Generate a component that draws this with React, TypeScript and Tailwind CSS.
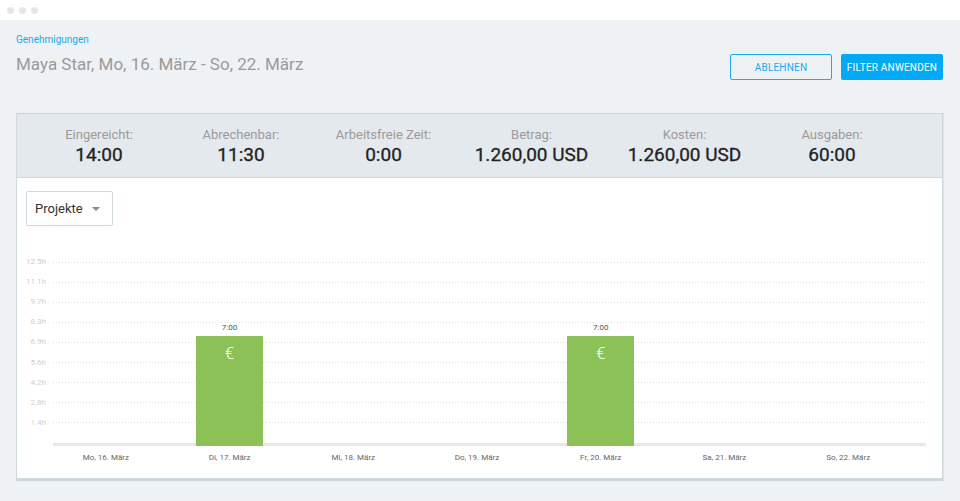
import React from "react";

const yTicks = ["12.5h", "11.1h", "9.7h", "8.3h", "6.9h", "5.6h", "4.2h", "2.8h", "1.4h"];

const days = [
  { label: "Mo, 16. März", hours: null },
  { label: "Di, 17. März", hours: "7:00" },
  { label: "Mi, 18. März", hours: null },
  { label: "Do, 19. März", hours: null },
  { label: "Fr, 20. März", hours: "7:00" },
  { label: "Sa, 21. März", hours: null },
  { label: "So, 22. März", hours: null },
];

const stats = [
  { label: "Eingereicht:", value: "14:00" },
  { label: "Abrechenbar:", value: "11:30" },
  { label: "Arbeitsfreie Zeit:", value: "0:00" },
  { label: "Betrag:", value: "1.260,00 USD" },
  { label: "Kosten:", value: "1.260,00 USD" },
  { label: "Ausgaben:", value: "60:00" },
];

export default function App() {
  return (
    <div className="w-[960px] h-[501px] overflow-hidden bg-[#eef2f5] font-['Roboto',sans-serif]">
      {/* Window chrome */}
      <div className="h-[20px] bg-white flex items-center gap-[5px] pl-[7px]">
        <span className="w-[7px] h-[7px] rounded-full bg-[#e3e7ed]"></span>
        <span className="w-[7px] h-[7px] rounded-full bg-[#e3e7ed]"></span>
        <span className="w-[7px] h-[7px] rounded-full bg-[#e3e7ed]"></span>
      </div>

      {/* Page header */}
      <div className="pl-4 pr-[17px] flex justify-between">
        <div className="pt-[13px]">
          <div className="text-[10px] leading-[14px] text-[#1ba8ec]">Genehmigungen</div>
          <h1 className="mt-[5px] text-[17px] leading-[24px] text-[#9a9a9a]">
            Maya Star, Mo, 16. März - So, 22. März
          </h1>
        </div>
        <div className="pt-[34px] flex gap-[9px]">
          <button className="w-[102px] h-[26px] rounded-[2px] border border-[#1aa9f2] bg-transparent text-[#1aa9f2] text-[10px] tracking-[0.2px]">
            ABLEHNEN
          </button>
          <button className="w-[102px] h-[26px] rounded-[2px] bg-[#03a9f4] text-white text-[10px] tracking-[0.2px]">
            FILTER ANWENDEN
          </button>
        </div>
      </div>

      {/* Card */}
      <div className="mt-[33px] ml-4 w-[927px] border border-[#cfd8dd] border-b-0 shadow-[1px_0_1px_rgba(0,0,0,0.06)]">
        {/* Stats band */}
        <div className="h-[64px] bg-[#e4e9ed] border-b border-[#cfd8dd] grid grid-cols-[140px_144px_141px_155px_151px_144px] pl-[12px] pt-[12px]">
          {stats.map((s) => (
            <div key={s.label} className="flex flex-col items-center">
              <span className="text-[13px] leading-[17px] text-[#9b9b9b]">{s.label}</span>
              <span className="text-[19px] leading-[24px] font-normal text-[#222] [-webkit-text-stroke:0.3px_#222]">{s.value}</span>
            </div>
          ))}
        </div>

        {/* Chart body */}
        <div className="bg-white pt-[13px] pb-[14px] border-b-[3px] border-[#cdd7de]">
          <div className="ml-[9px] w-[87px] h-[35px] border border-[#cfd8dc] rounded-[2px] flex items-center justify-between pl-[8px] pr-[12px]">
            <span className="text-[13px] text-[#333]">Projekte</span>
            <svg width="8" height="4" viewBox="0 0 8 4">
              <path d="M0 0h8L4 4z" fill="#8a8a8a" />
            </svg>
          </div>

          <div className="mt-[26px] grid">
            {/* grid lines */}
            <div className="col-start-1 row-start-1 flex flex-col">
              {yTicks.map((t) => (
                <div key={t} className="h-[20.1px] flex items-center">
                  <span className="w-[29px] text-right text-[8px] leading-[10px] text-[#cfcfcf]">{t}</span>
                  <span className="ml-[7px] w-[873px] h-px bg-[repeating-linear-gradient(90deg,#dcdcdc_0_1px,transparent_1px_3px)]"></span>
                </div>
              ))}
              <div className="h-[10px]"></div>
              <div className="ml-[36px] w-[873px] h-[3px] bg-[#e4e9ec]"></div>
            </div>

            {/* bars */}
            <div className="col-start-1 row-start-1 ml-[27px] w-[866px] grid grid-cols-7 items-end">
              {days.map((d) => (
                <div key={d.label} className="flex flex-col items-center justify-end">
                  {d.hours && (
                    <>
                      <span className="text-[8px] leading-[10px] text-[#555]">{d.hours}</span>
                      <div className="mt-[3px] w-[67px] h-[110px] bg-[#8bc157] flex justify-center">
                        <span className="mt-[6px] text-[17px] leading-[22px] text-white font-light">€</span>
                      </div>
                    </>
                  )}
                </div>
              ))}
            </div>
          </div>

          {/* x labels */}
          <div className="mt-[6px] ml-[27px] w-[866px] grid grid-cols-7">
            {days.map((d) => (
              <span key={d.label} className="text-center text-[8px] leading-[12px] text-[#666]">
                {d.label}
              </span>
            ))}
          </div>
        </div>
      </div>
    </div>
  );
}
